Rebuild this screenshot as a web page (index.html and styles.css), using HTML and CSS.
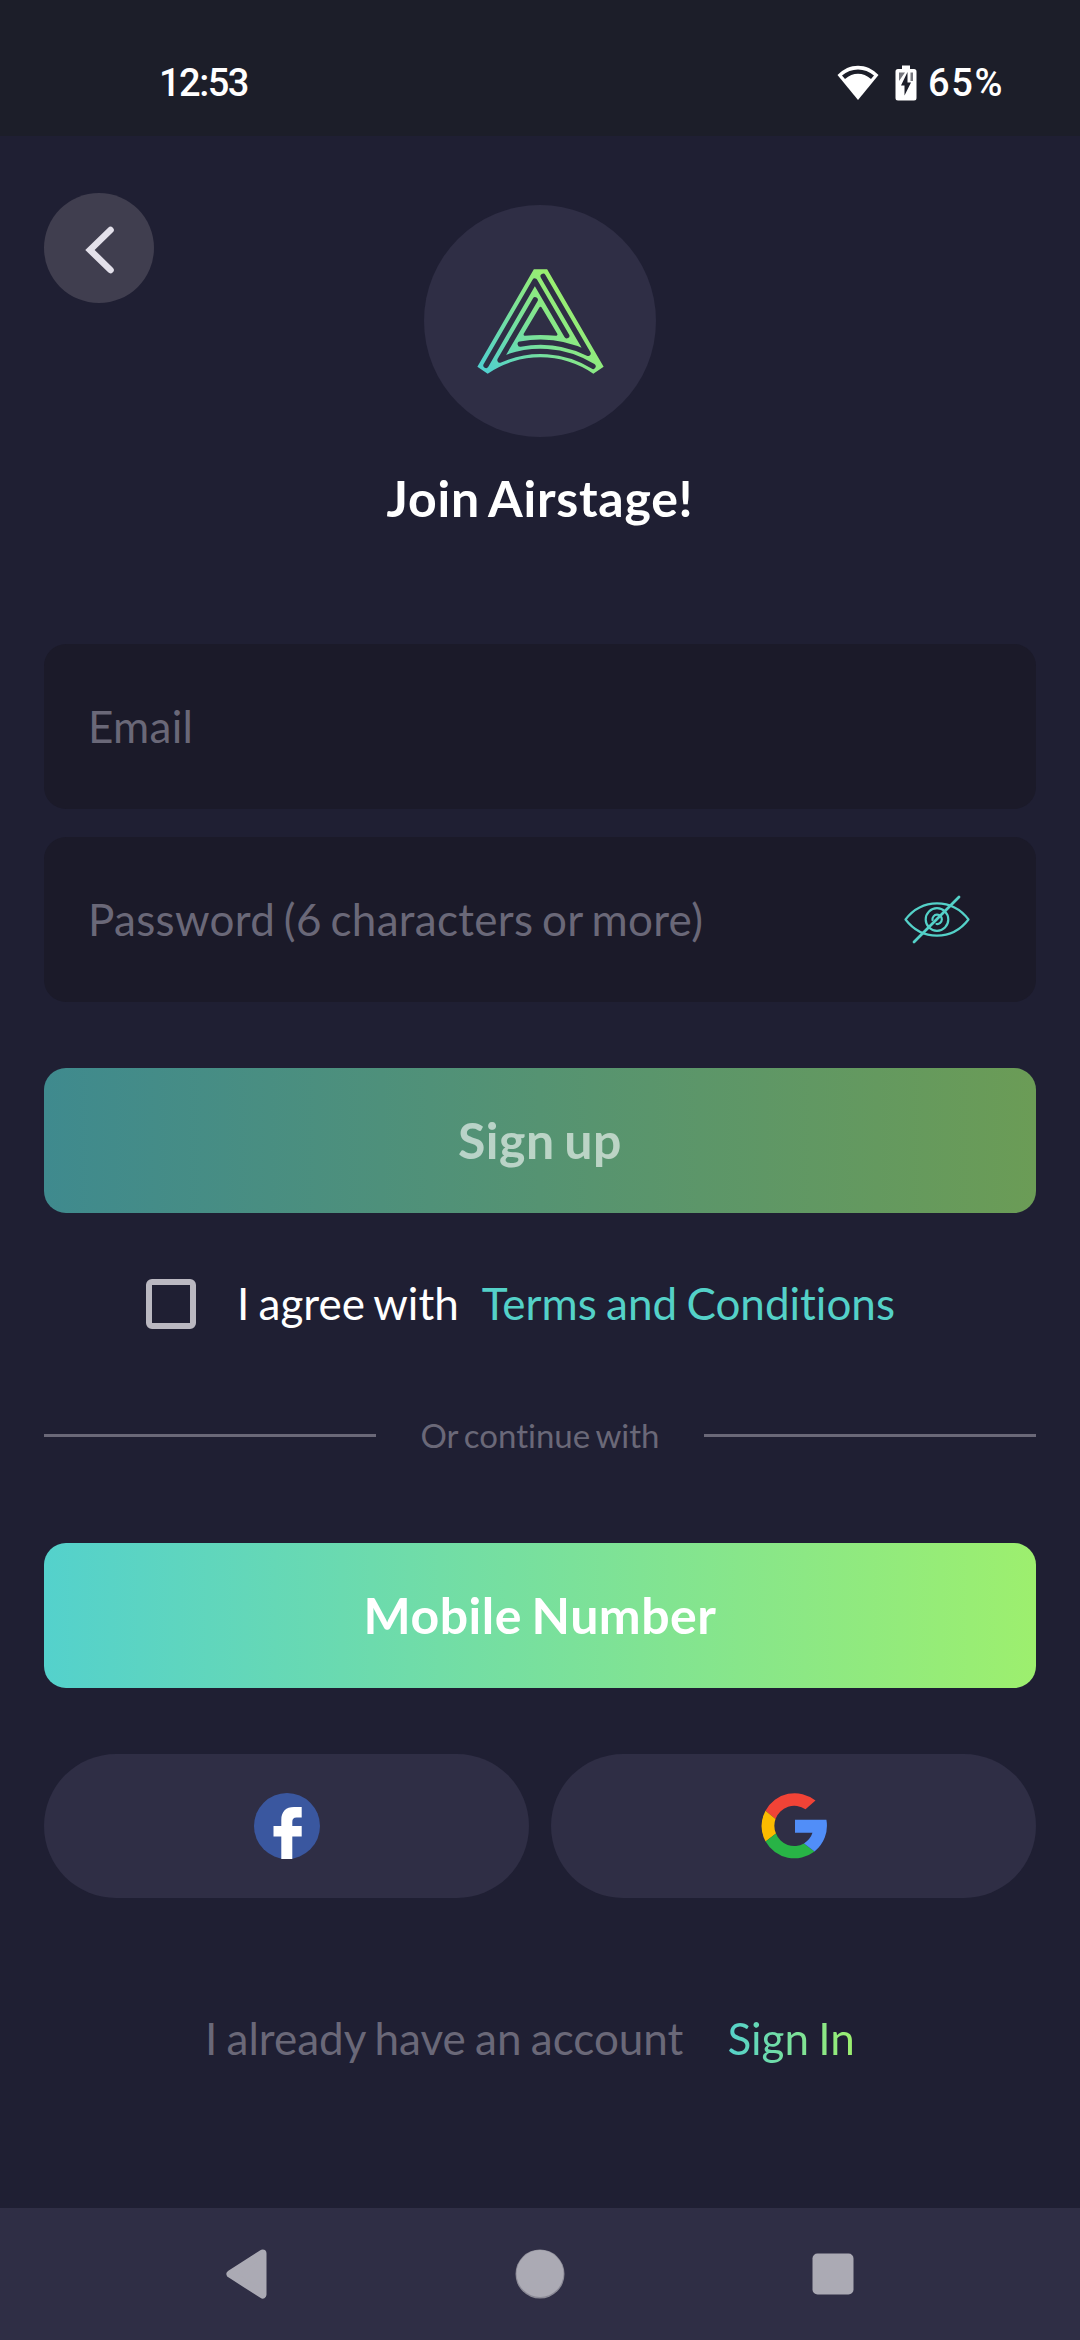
FILE: index.html
```html
<!DOCTYPE html>
<html lang="en">
<head>
    <meta charset="UTF-8">
    <title>Join Airstage</title>
    <link rel="stylesheet" href="styles.css">
</head>
<body>

    <div class="statusbar">
        <span class="time">12:53</span>
        <div class="status-icons">
            <svg class="wifi" width="42" height="36" viewBox="0 0 42 36">
                <path d="M21 35 L0.5 10 C12 -2.5 30 -2.5 41.5 10 Z" fill="#fff"/>
                <path d="M5 10.5 C14 2.5 28 2.5 37 10.5 L34 14 C26 7 16 7 8 14 Z" fill="#1c1e29"/>
            </svg>
            <svg class="battery" width="22" height="36" viewBox="0 0 22 36">
                <path d="M7 0.5 H15 V4 H19 Q21.5 4 21.5 6.500 V33 Q21.500 35.500 19 35.500 H3 Q0.500 35.500 0.500 33 V6.500 Q0.500 4 3 4 H7 Z" fill="#fff"/>
                <path d="M4 7.500 H10 L4 16 Z M15.500 7.500 H18 V16 H15.500 Z" fill="#75767d"/>
                <path d="M12.500 7 L6 20.500 H9.500 V30.500 L16 17.500 H12.500 Z" fill="#1c1e29"/>
            </svg>
            <span class="percent">65%</span>
        </div>
    </div>

    <div class="page">
        <header class="header">
            <button type="button" class="back" aria-label="Back">
                <svg width="30" height="48" viewBox="0 0 30 48">
                    <path d="M26.500 4 L6 24 L26.500 44" fill="none" stroke="#e3e0ea" stroke-width="6.600" stroke-linecap="round"/>
                </svg>
            </button>
            <div class="logo">
                <svg width="127" height="105" viewBox="170 204 380 316">
                    <defs>
                        <linearGradient id="brand" gradientUnits="userSpaceOnUse" x1="190" y1="500" x2="446" y2="293">
                            <stop offset="0" stop-color="#52d1cd"/>
                            <stop offset="1" stop-color="#9bef6f"/>
                        </linearGradient>
                    </defs>
                    <path d="M340 205 H380 L550 498 L519 519 A282 282 0 0 0 201 519 L170 498 Z" fill="url(#brand)"/>
                    <g fill="none" stroke="#2f2e45" stroke-width="16" stroke-linecap="round" stroke-linejoin="round">
                        <path d="M368 226 L503 458 A328 328 0 0 0 299 430"/>
                        <path d="M518 497 A300 300 0 0 0 238 478 L344 297"/>
                        <path d="M196 494 L343 240 L439 405"/>
                    </g>
                    <path d="M360 322 L407 401 Q360 397 313 401 Z" fill="#2f2e45" stroke="#2f2e45" stroke-width="8" stroke-linejoin="round"/>
                </svg>
            </div>
        </header>

        <h1 class="title">Join Airstage!</h1>

        <form class="form">
            <div class="field">
                <input type="text" name="email" placeholder="Email">
            </div>
            <div class="field">
                <input type="password" name="password" placeholder="Password (6 characters or more)">
                <svg class="eye" width="66" height="50" viewBox="0 0 66 50" fill="none" stroke="#54d1c8" stroke-width="2.200" stroke-linecap="round" stroke-linejoin="round">
                    <path d="M1.500 24.500 C18 3 48 3 64.500 24.500 C48 46 18 46 1.500 24.500 Z"/>
                    <circle cx="33" cy="24.500" r="11.300"/>
                    <path d="M32.500 29 A4.700 4.700 0 1 0 28.500 25"/>
                    <path d="M10 47 L55 2" stroke-width="2.800"/>
                </svg>
            </div>
            <button type="submit" class="btn signup" disabled>Sign up</button>

            <div class="agree">
                <input type="checkbox" class="check" id="agree">
                <label for="agree">I agree with</label>
                <a class="terms">Terms and Conditions</a>
            </div>
        </form>

        <div class="divider">Or continue with</div>

        <button type="button" class="btn">Mobile Number</button>

        <div class="social">
            <button type="button" class="social-btn" aria-label="Facebook">
                <svg width="66" height="66" viewBox="0 0 66 66">
                    <circle cx="33" cy="33" r="33" fill="#3a579f"/>
                    <path d="M27.300 66 V43.500 H19.500 V33 H27.300 V27 C27.300 18.500 32 14 40 14 H47.700 V24.500 H42.500 C39.500 24.500 38.300 26 38.300 29 V33 H47.700 V43.500 H38.300 V66 Z" fill="#fff"/>
                </svg>
            </button>
            <button type="button" class="social-btn" aria-label="Google">
                <svg width="66" height="66" viewBox="0 0 66 66">
                    <path d="M4.500 17.700 A33 33 0 0 1 54.500 7.600 L44.500 16.200 A20 20 0 0 0 14.500 26 Z" fill="#f14336"/>
                    <path d="M4.600 48.500 A33 33 0 0 1 4.500 17.700 L14.500 26 A20 20 0 0 0 15 40.500 Z" fill="#fbbb00"/>
                    <path d="M53.500 58.500 A33 33 0 0 1 4.600 48.500 L15 40.500 A19.500 19.500 0 0 0 43 50.500 Z" fill="#28b446"/>
                    <path d="M34 26.800 H65.400 A33 33 0 0 1 53.500 58.500 L43 50.500 Q49.500 46 51.500 39.800 H34 Z" fill="#518ef8"/>
                </svg>
            </button>
        </div>

        <div class="signin">
            <span>I already have an account</span>
            <a class="signin-link">Sign In</a>
        </div>
    </div>

    <div class="navbar">
        <svg width="42" height="50" viewBox="0 0 42 50">
            <path d="M36.500 4.500 L4.500 25 L36.500 45.500 Z" fill="#abaab4" stroke="#abaab4" stroke-width="8" stroke-linejoin="round"/>
        </svg>
        <svg width="50" height="50" viewBox="0 0 50 50">
            <circle cx="25" cy="25" r="24.500" fill="#8b8a96"/>
            <circle cx="25" cy="24.500" r="23.500" fill="#abaab4"/>
        </svg>
        <svg width="42" height="50" viewBox="0 0 42 50">
            <rect x="0.500" y="4.500" width="41" height="41" rx="5" fill="#abaab4"/>
        </svg>
    </div>

</body>
</html>
```

FILE: styles.css
```css
* {
    box-sizing: border-box;
}
body {
    margin: 0;
    height: 2340px;
    display: flex;
    flex-direction: column;
    background: #1f1f33;
    color: white;
    font-family: Lato, sans-serif;
    font-size: 44px;
    font-variant-ligatures: none;
}
svg {
    display: block;
}
button {
    border: none;
    padding: 0;
    font-family: inherit;
    cursor: pointer;
}

/* status bar */
.statusbar {
    height: 136px;
    padding: 30px 76px 0 159px;
    display: flex;
    justify-content: space-between;
    align-items: center;
    background: #1c1e29;
    font-family: Roboto, sans-serif;
    font-size: 38px;
    font-weight: 500;
}
.time {
    letter-spacing: -1.5px;
}
.status-icons {
    display: flex;
    align-items: center;
}
.battery {
    margin: 0 11px 0 16px;
}
.percent {
    letter-spacing: 1.6px;
}

/* content */
.page {
    flex: 1;
    padding: 57px 44px 0;
}
.header {
    display: grid;
    grid-template-columns: 110px 1fr 110px;
    align-items: start;
    justify-items: center;
}
.back {
    width: 110px;
    height: 110px;
    border-radius: 50%;
    background: #403e4f;
    display: flex;
    align-items: center;
    justify-content: center;
    padding-top: 3px;
}
.logo {
    width: 232px;
    height: 232px;
    margin-top: 12px;
    border-radius: 50%;
    background: #2f2e45;
    display: flex;
    align-items: center;
    justify-content: center;
}
.title {
    margin: 31px 0 116px;
    font-size: 50px;
    line-height: 60px;
    letter-spacing: 0.75px;
    word-spacing: -3px;
    text-align: center;
}
.field {
    height: 165px;
    margin-bottom: 28px;
    padding: 0 66px 0 44px;
    display: flex;
    align-items: center;
    border-radius: 22px;
    background: #1b1a29;
}
.field input {
    flex: 1;
    min-width: 0;
    padding: 0 0 2px;
    border: none;
    outline: none;
    background: none;
    color: white;
    font: inherit;
    letter-spacing: 0.3px;
    word-spacing: -2.8px;
}
.field input::placeholder {
    color: #6a6878;
}
.btn {
    display: block;
    width: 100%;
    height: 145px;
    padding-bottom: 2px;
    border-radius: 22px;
    background: linear-gradient(to right, #54d1cc, #9def6e);
    color: white;
    font-size: 50px;
    font-weight: bold;
    letter-spacing: 0.5px;
    word-spacing: -3px;
}
.signup {
    margin-top: 66px;
    background: linear-gradient(to right, #3f8a8e, #6b9c56);
    color: rgba(255, 255, 255, 0.6);
}
.agree {
    height: 50px;
    margin: 66px 0 0 102px;
    display: flex;
    align-items: center;
    word-spacing: -2px;
}
.agree label,
.terms {
    padding-bottom: 2px;
}
.check {
    appearance: none;
    width: 50px;
    height: 50px;
    margin: 0 41px 0 0;
    border: 6px solid #bab8c1;
    border-radius: 6px;
}
.terms {
    margin-left: 23px;
    color: #54d1c8;
}
.divider {
    height: 40px;
    margin: 86px 0 88px;
    display: flex;
    align-items: center;
    gap: 44px;
    color: #6a6878;
    font-size: 33px;
    word-spacing: -2.5px;
}
.divider::before,
.divider::after {
    content: "";
    flex: 1;
    height: 3px;
    background: #6a6878;
}
.social {
    margin-top: 66px;
    display: flex;
    gap: 22px;
}
.social-btn {
    flex: 1;
    height: 144px;
    border-radius: 72px;
    background: #2f2e45;
    display: flex;
    align-items: center;
    justify-content: center;
}
.signin {
    margin: 114px 0 0 161px;
    display: flex;
    gap: 44px;
    line-height: 52px;
    color: #6a6878;
    word-spacing: -2px;
}
.signin-link {
    background: linear-gradient(to right, #54d1cc, #9def6e);
    background-clip: text;
    -webkit-background-clip: text;
    color: transparent;
}

/* bottom navigation */
.navbar {
    height: 132px;
    padding: 0 226px;
    display: flex;
    align-items: center;
    justify-content: space-between;
    background: #2f2e45;
}
```
